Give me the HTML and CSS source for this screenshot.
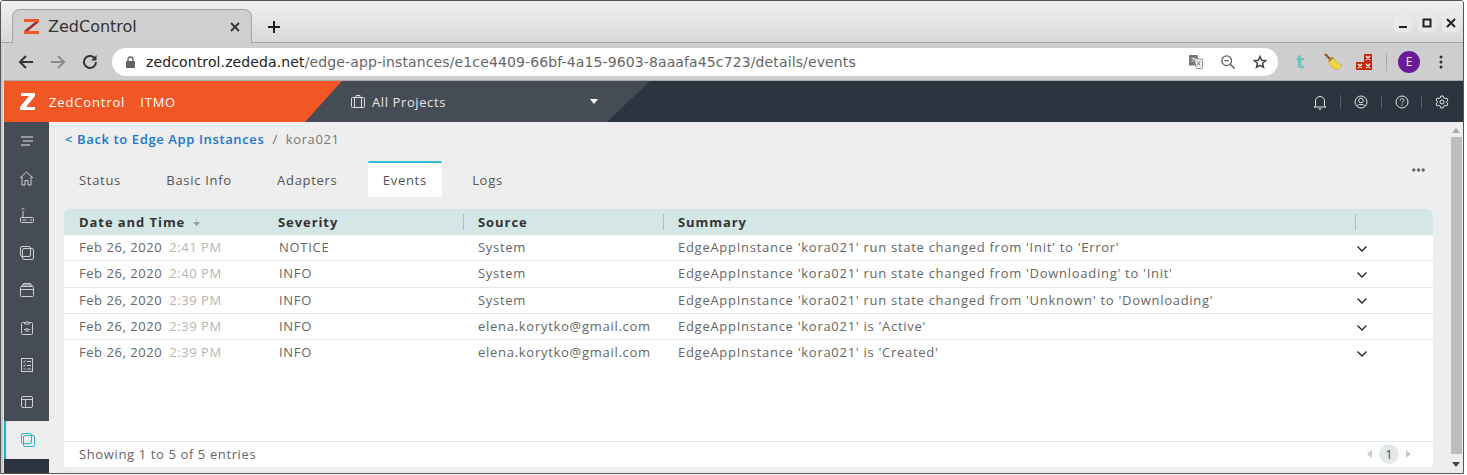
FILE: index.html
```html
<!DOCTYPE html>
<html lang="en">
<head>
<meta charset="utf-8">
<title>ZedControl</title>
<link rel="stylesheet" href="styles.css">
</head>
<body>
<div class="window">
  <div class="tabstrip">
    <div class="tab">
      <svg class="favicon" width="17" height="17" viewBox="0 0 17 17"><path d="M1 1h15v3H1z" fill="#f15a24"/><path d="M16 4 5 13H1L12 4z" fill="#a32a2a"/><path d="M1 13h15v3H1z" fill="#f15a24"/></svg>
      <span class="tab-title">ZedControl</span>
      <svg class="tab-close" width="10" height="10" viewBox="0 0 10 10"><path d="M1 1l8 8M9 1l-8 8" stroke="#333" stroke-width="1.8"/></svg>
    </div>
    <svg class="new-tab" width="14" height="14" viewBox="0 0 14 14"><path d="M7 1v12M1 7h12" stroke="#222" stroke-width="2"/></svg>
    <div class="win-controls">
      <span class="win-btn"><svg width="10" height="10" viewBox="0 0 10 10"><path d="M1 9h8" stroke="#222" stroke-width="2"/></svg></span>
      <span class="win-btn"><svg width="10" height="10" viewBox="0 0 10 10"><rect x="1.5" y="1.5" width="7" height="7" fill="none" stroke="#222" stroke-width="2"/></svg></span>
      <span class="win-btn"><svg width="10" height="10" viewBox="0 0 10 10"><path d="M1 1l8 8M9 1l-8 8" stroke="#222" stroke-width="2"/></svg></span>
    </div>
  </div>
  <div class="toolbar">
    <svg class="nav-icon" width="16" height="16" viewBox="0 0 16 16"><path d="M15 8H2M8 2 2 8l6 6" fill="none" stroke="#333" stroke-width="2"/></svg>
    <svg class="nav-icon" width="16" height="16" viewBox="0 0 16 16"><path d="M1 8h13M8 2l6 6-6 6" fill="none" stroke="#8d8d8d" stroke-width="2"/></svg>
    <svg class="nav-icon" width="16" height="16" viewBox="0 0 16 16"><path d="M14 8a6 6 0 1 1-1.8-4.3" fill="none" stroke="#333" stroke-width="2"/><path d="M14.5 1v5.5H9z" fill="#333"/></svg>
    <div class="omnibox">
      <svg class="lock" width="9" height="12" viewBox="0 0 9 12"><path d="M2 5V3.500a2.500 2.500 0 0 1 5 0V5" fill="none" stroke="#5f6368" stroke-width="1.300"/><rect y="5" width="9" height="7" rx="1" fill="#5f6368"/></svg>
      <span class="url"><span class="url-host">zedcontrol.zededa.net</span>/edge-app-instances/e1ce4409-66bf-4a15-9603-8aaafa45c723/details/events</span>
      <svg class="omni-icon" width="14" height="14" viewBox="0 0 16 16"><rect x="0" y="0" width="10" height="12" fill="#777"/><path d="M6 4.500h9.500v11H8.500z" fill="#f5f5f5" stroke="#888"/><path d="M9 7l4 5M13 7l-4 5" stroke="#666"/><path d="M2.500 4h5M3 8l3-4" stroke="#eee"/></svg>
      <svg class="omni-icon" width="14" height="14" viewBox="0 0 16 16"><circle cx="6.500" cy="6.500" r="5.500" fill="none" stroke="#5f6368" stroke-width="1.500"/><path d="M10.500 10.500l5 5" stroke="#5f6368" stroke-width="1.800"/><path d="M4 6.500h5" stroke="#5f6368" stroke-width="1.500"/></svg>
      <svg class="omni-icon" width="14" height="14" viewBox="0 0 16 16"><path d="M8 1.800l1.900 4.200 4.500.5-3.400 3 1 4.500L8 11.700 4 14l1-4.500-3.400-3 4.500-.5z" fill="none" stroke="#444" stroke-width="1.700"/></svg>
    </div>
    <span class="ext-t">t</span>
    <svg class="ext" width="18" height="17" viewBox="0 0 18 17"><path d="M1 1l5 5" stroke="#8a5a1c" stroke-width="2.400"/><path d="M4 8l4-4 2 1-5 4z" fill="#a8772a"/><path d="M5 9l5-4c1 3 4 6 8 7-1 3-5 5-7 4-3-1-5-4-6-7z" fill="#f0d640" stroke="#c0a428" stroke-width=".6"/></svg>
    <svg class="ext ext-red" width="16" height="16" viewBox="0 0 16 16"><path d="M8 0h8v16H0V8h8z" fill="#c8260c"/><path d="M10 2l4 4M14 2l-4 4M10 10l4 4M14 10l-4 4M2 10l4 4M6 10l-4 4" stroke="#fff" stroke-width="1.300"/></svg>
    <span class="tool-sep"></span>
    <span class="avatar">E</span>
    <svg class="kebab" width="4" height="14" viewBox="0 0 4 14"><circle cx="2" cy="2" r="1.500" fill="#333"/><circle cx="2" cy="7" r="1.500" fill="#333"/><circle cx="2" cy="12" r="1.500" fill="#333"/></svg>
  </div>
  <header class="app-header">
    <div class="brand">
      <svg class="brand-z" width="16" height="19" viewBox="0 0 16 19"><path d="M1 1h14v3L6 15h9v3H0v-3L9 4H1z" fill="#fff"/></svg>
      <span class="brand-name">ZedControl</span>
      <span class="brand-org">ITMO</span>
    </div>
    <div class="projects">
      <svg class="proj-icon" width="14" height="13" viewBox="0 0 14 13"><rect x=".5" y="2.500" width="13" height="10" rx="1" fill="none" stroke="#ddd"/><path d="M3.500 2.500v10M10.500 2.500v10M5 2.500V.5h4v2" fill="none" stroke="#ddd"/></svg>
      <span class="proj-name">All Projects</span>
      <span class="proj-caret"></span>
    </div>
    <div class="header-actions">
      <span class="action"><svg width="16" height="16" viewBox="0 0 16 16"><path d="M3.500 12V7a4.500 4.500 0 0 1 9 0v5l1.500 1H2zM6.500 15h3" fill="none" stroke="#e5e5e5"/></svg></span>
      <span class="action"><svg width="14" height="14" viewBox="0 0 14 14"><circle cx="7" cy="7" r="6" fill="none" stroke="#e5e5e5"/><circle cx="7" cy="5.500" r="2.300" fill="none" stroke="#e5e5e5"/><path d="M2.800 11c1-2 7.400-2 8.400 0" fill="none" stroke="#e5e5e5"/></svg></span>
      <span class="action"><svg width="14" height="14" viewBox="0 0 14 14"><circle cx="7" cy="7" r="6" fill="none" stroke="#e5e5e5"/><path d="M5.200 5.300c0-2.400 3.700-2.300 3.700 0 0 1.500-1.900 1.500-1.900 3M7 9.500v1.300" fill="none" stroke="#e5e5e5"/></svg></span>
      <span class="action"><svg width="14" height="14" viewBox="0 0 14 14"><circle cx="7" cy="7" r="2" fill="none" stroke="#e5e5e5"/><path d="M5.800 1h2.400l.4 1.800 1.500.8 1.700-.6 1.200 2.100-1.300 1.200v1.400L13 8.900l-1.200 2.100-1.700-.6-1.500.8L8.200 13H5.800l-.4-1.800-1.500-.8-1.700.6L1 8.900l1.300-1.200V6.300L1 5.100 2.200 3l1.700.6 1.500-.8z" fill="none" stroke="#e5e5e5"/></svg></span>
    </div>
  </header>
  <div class="app-body">
    <nav class="sidebar">
      <span class="side-item"><svg width="12" height="10" viewBox="0 0 12 10"><path d="M0 1h12M2 5h10M0 9h9" stroke="#e8e8e8" stroke-width="1"/></svg></span>
      <span class="side-item"><svg width="15" height="15" viewBox="0 0 15 15"><path d="M1 7 7.500 1 14 7M3 5.500V14h3V9.500h3V14h3V5.500" fill="none" stroke="#cfcfcf"/></svg></span>
      <span class="side-item"><svg width="14" height="15" viewBox="0 0 14 15"><rect x=".5" y="9.500" width="13" height="5" rx="1" fill="none" stroke="#cfcfcf"/><path d="M3 3v6.500" stroke="#cfcfcf"/><path d="M1.500 1.500c1-1 2-1 3 0" fill="none" stroke="#cfcfcf"/><path d="M2.500 12h4M10 12h2" stroke="#cfcfcf"/></svg></span>
      <span class="side-item"><svg width="14" height="14" viewBox="0 0 14 14"><rect x=".5" y=".5" width="10" height="10" rx="1.500" fill="none" stroke="#cfcfcf"/><rect x="2.500" y="2.500" width="11" height="11" rx="1.500" fill="none" stroke="#cfcfcf"/></svg></span>
      <span class="side-item"><svg width="14" height="14" viewBox="0 0 14 14"><rect x=".5" y="3.500" width="13" height="10" rx="1" fill="none" stroke="#cfcfcf"/><path d="M.5 6.500h13M2 3.500v-1.500h10v1.500M3.500 2V.5h7V2" fill="none" stroke="#cfcfcf"/></svg></span>
      <span class="side-item"><svg width="12" height="15" viewBox="0 0 12 15"><path d="M3.500 2.500H1.500a1 1 0 0 0-1 1v10a1 1 0 0 0 1 1h9a1 1 0 0 0 1-1v-10a1 1 0 0 0-1-1H8.500M3.500 4V2.500H5a1 1 0 0 1 2 0h1.500V4z" fill="none" stroke="#cfcfcf"/><path d="M3 9.500h2l1-1.500 1 1.500h2M4 11h4" fill="none" stroke="#cfcfcf"/></svg></span>
      <span class="side-item"><svg width="12" height="14" viewBox="0 0 12 14"><rect x=".5" y=".5" width="11" height="13" fill="none" stroke="#cfcfcf"/><path d="M2 3.500l1 1 1.500-2M6 3.500h4M2 7.500l1 1 1.500-2M6 7.500h4M2.500 11h2M6 11h4" fill="none" stroke="#cfcfcf"/></svg></span>
      <span class="side-item"><svg width="12" height="12" viewBox="0 0 12 12"><rect x=".5" y=".5" width="11" height="11" rx="1.500" fill="none" stroke="#cfcfcf"/><path d="M.5 3.500h11M4.500 3.500v8" stroke="#cfcfcf"/></svg></span>
      <span class="side-item side-active"><svg width="14" height="14" viewBox="0 0 14 14"><rect x=".5" y=".5" width="10" height="10" rx="1.500" fill="none" stroke="#26b8cf"/><rect x="2.500" y="2.500" width="11" height="11" rx="1.500" fill="none" stroke="#26b8cf"/></svg></span>
      <span class="side-rest"></span>
    </nav>
    <main class="content">
      <div class="crumbs">
        <a class="crumb-link">&lt; Back to Edge App Instances</a>
        <span class="crumb-sep">/</span>
        <span class="crumb-cur">kora021</span>
      </div>
      <div class="tabs-row">
        <span class="page-tab">Status</span>
        <span class="page-tab">Basic Info</span>
        <span class="page-tab">Adapters</span>
        <span class="page-tab page-tab-active">Events</span>
        <span class="page-tab">Logs</span>
        <svg class="more-dots" width="13" height="4" viewBox="0 0 13 4"><circle cx="1.800" cy="2" r="1.700" fill="#666"/><circle cx="6.500" cy="2" r="1.700" fill="#666"/><circle cx="11.200" cy="2" r="1.700" fill="#666"/></svg>
      </div>
      <section class="card">
        <div class="row head">
          <span class="cell first">Date and Time <svg class="sort" width="7" height="7" viewBox="0 0 7 7"><path d="M3.500 0v4M.5 3.500h6l-3 3z" fill="#999" stroke="#999" stroke-width=".6"/></svg></span>
          <span class="cell sev">Severity</span>
          <span class="cell src">Source</span>
          <span class="cell sum">Summary</span>
          <span class="cell tail"></span>
        </div>
        <div class="row">
          <span class="cell first">Feb 26, 2020<span class="time">2:41 PM</span></span>
          <span class="cell sev">NOTICE</span><span class="cell src">System</span>
          <span class="cell sum">EdgeAppInstance 'kora021' run state changed from 'Init' to 'Error'</span>
          <span class="cell tail"><svg class="chev" width="10" height="6" viewBox="0 0 10 6"><path d="M.5.500 5 5 9.500.5" fill="none" stroke="#222" stroke-width="1.300"/></svg></span>
        </div>
        <div class="row">
          <span class="cell first">Feb 26, 2020<span class="time">2:40 PM</span></span>
          <span class="cell sev">INFO</span><span class="cell src">System</span>
          <span class="cell sum">EdgeAppInstance 'kora021' run state changed from 'Downloading' to 'Init'</span>
          <span class="cell tail"><svg class="chev" width="10" height="6" viewBox="0 0 10 6"><path d="M.5.500 5 5 9.500.5" fill="none" stroke="#222" stroke-width="1.300"/></svg></span>
        </div>
        <div class="row">
          <span class="cell first">Feb 26, 2020<span class="time">2:39 PM</span></span>
          <span class="cell sev">INFO</span><span class="cell src">System</span>
          <span class="cell sum">EdgeAppInstance 'kora021' run state changed from 'Unknown' to 'Downloading'</span>
          <span class="cell tail"><svg class="chev" width="10" height="6" viewBox="0 0 10 6"><path d="M.5.500 5 5 9.500.5" fill="none" stroke="#222" stroke-width="1.300"/></svg></span>
        </div>
        <div class="row">
          <span class="cell first">Feb 26, 2020<span class="time">2:39 PM</span></span>
          <span class="cell sev">INFO</span><span class="cell src">elena.korytko@gmail.com</span>
          <span class="cell sum">EdgeAppInstance 'kora021' is 'Active'</span>
          <span class="cell tail"><svg class="chev" width="10" height="6" viewBox="0 0 10 6"><path d="M.5.500 5 5 9.500.5" fill="none" stroke="#222" stroke-width="1.300"/></svg></span>
        </div>
        <div class="row row-last">
          <span class="cell first">Feb 26, 2020<span class="time">2:39 PM</span></span>
          <span class="cell sev">INFO</span><span class="cell src">elena.korytko@gmail.com</span>
          <span class="cell sum">EdgeAppInstance 'kora021' is 'Created'</span>
          <span class="cell tail"><svg class="chev" width="10" height="6" viewBox="0 0 10 6"><path d="M.5.500 5 5 9.500.5" fill="none" stroke="#222" stroke-width="1.300"/></svg></span>
        </div>
        <div class="card-foot">
          <span class="entries">Showing 1 to 5 of 5 entries</span>
          <div class="pager"><span class="pg-left"></span><span class="pg-num">1</span><span class="pg-right"></span></div>
        </div>
      </section>
    </main>
    <div class="scrollbar">
      <span class="sb-up"></span>
      <span class="sb-thumb"></span>
      <span class="sb-down"></span>
    </div>
  </div>
</div>
</body>
</html>
```
FILE: styles.css
```css
* { box-sizing: border-box; }
html, body { margin: 0; padding: 0; background: #fff; }
body { width: 1467px; height: 475px; overflow: hidden; font-family: "Open Sans", sans-serif; }
.window { width: 1464px; height: 474px; border: 1px solid #555; border-radius: 3px 3px 0 0; padding: 0 0 0 3px; background: #e0e0e0; display: flex; flex-direction: column; overflow: hidden; box-shadow: inset 2px 0 0 #ccc; }
.tabstrip { height: 42px; flex: none; margin-left: -3px; padding: 8px 0 0 11px; display: flex; align-items: flex-start; background: linear-gradient(#f0f0f0, #d9d9d9); border-bottom: 1px solid #a3a3a3; }
.tab { width: 240px; height: 34px; background: #cfcfcf; border: 1px solid #a3a3a3; border-bottom: 0; border-radius: 8px 8px 0 0; display: flex; align-items: center; padding: 0 0 0 10px; }
.favicon { flex: none; }
.tab-title { font-family: "DejaVu Sans", sans-serif; font-size: 16px; color: #333; margin-left: 8px; flex: 1; }
.tab-close { margin-right: 11px; }
.new-tab { margin: 11px 0 0 15px; }
.win-controls { margin-left: auto; margin-top: 5px; margin-right: 3px; display: flex; gap: 6px; }
.win-btn { width: 18px; height: 18px; background: #e9e9e9; border-radius: 4px; display: flex; align-items: center; justify-content: center; }
.toolbar { height: 38px; flex: none; background: #cecece; display: flex; align-items: center; padding-left: 14px; border-bottom: 1px solid #a8a8a8; }
.nav-icon { flex: none; margin-right: 16px; }
.omnibox { width: 1166px; height: 28px; margin-left: -2px; background: #fff; border-radius: 14px; display: flex; align-items: center; padding-left: 14px; flex: none; }
.lock { flex: none; }
.url { font-family: "DejaVu Sans", sans-serif; font-size: 14px; letter-spacing: .12px; color: #666; margin-left: 11px; flex: 1; white-space: nowrap; }
.url-host { color: #222; }
.omni-icon { flex: none; margin-right: 18px; }
.omni-icon:last-child { margin-right: 11px; }
.ext-t { font-family: "DejaVu Sans", sans-serif; font-weight: 700; font-size: 17px; color: #6fc2bd; margin-left: 18px; width: 12px; }
.ext { flex: none; margin-left: 16px; }
.ext-red { margin-left: 14px; }
.tool-sep { width: 1px; height: 18px; background: #aaa; margin-left: 14px; }
.avatar { width: 22px; height: 22px; border-radius: 50%; background: #6a1b9a; color: #eee; font-size: 12px; display: flex; align-items: center; justify-content: center; margin-left: 11px; flex: none; }
.kebab { margin-left: 19px; flex: none; }
.app-header { height: 41px; flex: none; background: #2c343f; display: flex; align-items: center; color: #fff; }
.brand { width: 338px; height: 41px; background: #f15624; clip-path: polygon(0 0, 100% 0, calc(100% - 37px) 100%, 0 100%); display: flex; align-items: center; padding-left: 16px; position: relative; z-index: 1; flex: none; }
.brand-name { font-size: 13px; letter-spacing: .85px; margin-left: 13px; }
.brand-org { font-size: 13px; letter-spacing: .8px; margin-left: 15px; }
.projects { width: 345px; height: 41px; margin-left: -37px; background: #454c55; clip-path: polygon(0 0, 100% 0, calc(100% - 43px) 100%, 0 100%); display: flex; align-items: center; padding-left: 46px; flex: none; }
.proj-name { font-size: 13px; letter-spacing: .6px; color: #e5e5e5; margin-left: 7px; width: 218px; }
.proj-caret { width: 0; height: 0; border: 4.500px solid transparent; border-top: 5px solid #fff; border-bottom: 0; }
.header-actions { margin-left: auto; display: flex; align-items: center; padding-right: 1px; }
.action { width: 40.600px; height: 14px; display: flex; align-items: center; justify-content: center; border-left: 1px solid #555c66; }
.action:first-child { border-left: 0; }
.app-body { flex: 1; display: flex; min-height: 0; background: #eee; }
.sidebar { width: 45px; flex: none; background: #454c55; display: flex; flex-direction: column; }
.side-item { height: 37.400px; flex: none; display: flex; align-items: center; justify-content: center; }
.side-active { background: #eee; border-left: 2px solid #1ab5cc; }
.side-rest { flex: 1; background: #2c343f; }
.content { flex: 1; min-width: 0; padding: 0 16px 0 15px; display: flex; flex-direction: column; }
.crumbs { padding: 0 0 0 1px; font-size: 13px; letter-spacing: .62px; display: flex; align-items: center; flex: none; height: 34px; }
.crumb-link { color: #1b76d3; font-weight: 600; }
.crumb-sep { color: #777; margin: 0 8px; }
.crumb-cur { color: #777; }
.tabs-row { display: flex; gap: 15.300px; height: 36px; margin-top: 5px; align-items: stretch; position: relative; flex: none; }
.page-tab { padding: 1px 15px 0; font-size: 13px; letter-spacing: .7px; color: #555; display: flex; align-items: center; }
.page-tab-active { background: #fff; border-top: 2px solid #31bdd1; padding-top: 0; border-radius: 2px 2px 0 0; }
.more-dots { position: absolute; right: 8px; top: 7px; }
.card { margin-top: 12px; height: 258px; background: #fff; border-radius: 6px 6px 3px 3px; display: flex; flex-direction: column; flex: none; overflow: hidden; }
.row { height: 26.300px; flex: none; display: flex; align-items: center; padding-bottom: 1px; font-size: 13px; letter-spacing: .72px; color: #666; border-bottom: 1px solid #dfe8ea; }
.row-last { border-bottom: 0; padding-bottom: 2px; }
.head { height: 26px; padding-bottom: 0; background: #d5e6e6; color: #333; font-weight: 700; border-bottom: 0; letter-spacing: .93px; }
.cell { display: flex; align-items: center; height: 16px; white-space: nowrap; }
.first { width: 200px; padding-left: 15px; flex: none; }
.row:not(.head) .first { letter-spacing: .55px; }
.sev { width: 200px; padding-left: 15px; flex: none; }
.src { width: 200px; padding-left: 14px; flex: none; }
.sum { width: 692px; padding-left: 14px; flex: none; }
.tail { flex: 1; padding-left: 1px; }
.head .src, .head .sum, .head .tail { border-left: 1px solid #a9bcbf; }
.head .sev { width: 199px; padding-left: 14px; }
.sort { margin-left: 8px; }
.time { color: #b5b5b5; margin-left: 7px; }
.chev { margin-top: 3px; }
.card-foot { margin-top: auto; height: 26px; flex: none; border-top: 1px solid #dfe8ea; display: flex; align-items: center; padding: 0 22px 1px 15px; font-size: 13px; letter-spacing: .62px; color: #666; }
.pager { margin-left: auto; display: flex; align-items: center; gap: 7px; }
.pg-left, .pg-right { width: 0; height: 0; border: 4px solid transparent; }
.pg-left { border-right: 5px solid #c9c9c9; border-left: 0; }
.pg-right { border-left: 5px solid #c9c9c9; border-right: 0; }
.pg-num { width: 20px; height: 20px; border-radius: 50%; background: #e3e8ec; color: #555; font-size: 13px; letter-spacing: 0; display: flex; align-items: center; justify-content: center; }
.scrollbar { width: 14px; flex: none; background: #eee; display: flex; flex-direction: column; align-items: center; padding: 6px 0 6px; }
.sb-up { width: 0; height: 0; border: 4px solid transparent; border-bottom: 5px solid #aaa; border-top: 0; flex: none; }
.sb-thumb { width: 11px; flex: 1; background: #bdbdbd; margin: 4px 0 8px; }
.sb-down { width: 0; height: 0; border: 4px solid transparent; border-top: 5px solid #444; border-bottom: 0; flex: none; }
```
